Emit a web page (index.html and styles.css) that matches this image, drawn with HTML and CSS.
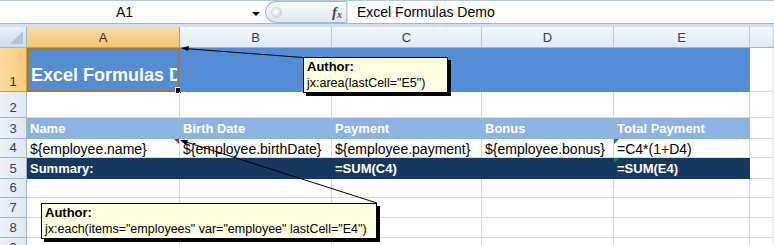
FILE: index.html
```html
<!DOCTYPE html>
<html>
<head>
<meta charset="utf-8">
<link rel="stylesheet" href="styles.css">
</head>
<body>
<div class="app">
  <div class="fbar">
    <div class="namebox"><span class="nb-text">A1</span><span class="nb-arrow"></span></div>
    <div class="pill"><span class="knob"></span><span class="fx">f<sub>x</sub></span></div>
    <div class="finput">Excel Formulas Demo</div>
  </div>
  <div class="band"></div>
  <div class="sheet">
    <div class="corner"><span class="corner-tri"></span></div>
    <div class="ch sel">A</div>
    <div class="ch">B</div>
    <div class="ch">C</div>
    <div class="ch">D</div>
    <div class="ch">E</div>
    <div class="ch last"></div>

    <div class="rh sel">1</div>
    <div class="c title a1"><span>Excel Formulas Demo</span><i class="handle"></i></div>
    <div class="c title"></div>
    <div class="c title"></div>
    <div class="c title"></div>
    <div class="c title"></div>
    <div class="c"></div>

    <div class="rh">2</div>
    <div class="c"></div><div class="c"></div><div class="c"></div><div class="c"></div><div class="c"></div><div class="c"></div>

    <div class="rh">3</div>
    <div class="c hdr">Name</div>
    <div class="c hdr">Birth Date</div>
    <div class="c hdr">Payment</div>
    <div class="c hdr">Bonus</div>
    <div class="c hdr">Total Payment</div>
    <div class="c"></div>

    <div class="rh">4</div>
    <div class="c data">${employee.name}<i class="red-tri"></i></div>
    <div class="c data">${employee.birthDate}</div>
    <div class="c data">${employee.payment}</div>
    <div class="c data">${employee.bonus}</div>
    <div class="c data">=C4*(1+D4)<i class="green-tri"></i></div>
    <div class="c"></div>

    <div class="rh">5</div>
    <div class="c sum">Summary:</div>
    <div class="c sum"></div>
    <div class="c sum">=SUM(C4)</div>
    <div class="c sum"></div>
    <div class="c sum">=SUM(E4)<i class="green-tri"></i></div>
    <div class="c"></div>

    <div class="rh">6</div>
    <div class="c"></div><div class="c"></div><div class="c"></div><div class="c"></div><div class="c"></div><div class="c"></div>
    <div class="rh">7</div>
    <div class="c"></div><div class="c"></div><div class="c"></div><div class="c"></div><div class="c"></div><div class="c"></div>
    <div class="rh">8</div>
    <div class="c"></div><div class="c"></div><div class="c"></div><div class="c"></div><div class="c"></div><div class="c"></div>
    <div class="rh">9</div>
    <div class="c"></div><div class="c"></div><div class="c"></div><div class="c"></div><div class="c"></div><div class="c"></div>
  </div>

  <svg class="arrows" width="774" height="245" viewBox="0 0 774 245">
    <line x1="303" y1="57.5" x2="184" y2="48.5" stroke="#000" stroke-width="1"/>
    <polygon points="181,48 189,46 188,51" fill="#000"/>
    <line x1="377" y1="203" x2="183" y2="141" stroke="#000" stroke-width="1"/>
    <polygon points="180,140 188,140 186,145" fill="#000"/>
  </svg>

  <div class="note note1">
    <div class="note-author">Author:</div>
    <div class="note-text">jx:area(lastCell="E5")</div>
  </div>
  <div class="note note2">
    <div class="note-author">Author:</div>
    <div class="note-text">jx:each(items="employees" var="employee" lastCell="E4")</div>
  </div>
</div>
</body>
</html>
```
FILE: styles.css
```css
html, body {
  margin: 0;
  padding: 0;
  background: #ffffff;
  overflow: hidden;
}
.app {
  position: relative;
  width: 774px;
  height: 245px;
  overflow: hidden;
  font-family: "Liberation Sans", Arial, sans-serif;
}
.fbar {
  height: 24px;
  box-sizing: border-box;
  display: flex;
  background: #ffffff;
  border-top: 1px solid #b7c9e0;
  border-bottom: 1px solid #9eb6ce;
}
.namebox {
  width: 265px;
  position: relative;
  display: flex;
  align-items: center;
  justify-content: center;
  font-size: 14px;
  color: #000;
  background: #fff;
}
.nb-text { margin-left: -16px; }
.nb-arrow {
  position: absolute;
  left: 252px;
  top: 11px;
  width: 0;
  height: 0;
  border-left: 4px solid transparent;
  border-right: 4px solid transparent;
  border-top: 4px solid #000;
}
.pill {
  width: 82px;
  box-sizing: border-box;
  border: 1px solid #a7b9cf;
  border-right: 1px solid #b5c6da;
  border-radius: 12px 0 0 12px;
  background: linear-gradient(#fbfcfe, #dfe7f2);
  display: flex;
  align-items: center;
  justify-content: space-between;
  padding: 0 4px 0 5px;
}
.knob {
  width: 9px;
  height: 9px;
  border-radius: 50%;
  background: radial-gradient(circle at 40% 40%, #ffffff, #c4ccd6);
  border: 1px solid #c9d1db;
}
.fx {
  font-family: "Liberation Serif", serif;
  font-style: italic;
  font-weight: bold;
  font-size: 15px;
  color: #4a4a4a;
  line-height: 1;
}
.fx sub {
  font-size: 10px;
  vertical-align: -1px;
}
.finput {
  flex: 1;
  padding-left: 9px;
  display: flex;
  align-items: center;
  font-size: 14px;
  color: #000;
  background: #fff;
  border-left: 1px solid #d6dfea;
}
.band {
  height: 3px;
  background: #d4e0ef;
}
.sheet {
  display: grid;
  grid-template-columns: 27px 153px 152px 150px 132px 136px 24px;
  grid-template-rows: 21px 44px 26px 21px 19px 21px 19px 20px 20px 20px;
}
.corner {
  position: relative;
  background: linear-gradient(#e9eff8, #cfdcec);
  border-right: 1px solid #9eb6ce;
  border-bottom: 1px solid #9eb6ce;
  box-sizing: border-box;
}
.corner-tri {
  position: absolute;
  right: 3px;
  bottom: 3px;
  width: 0;
  height: 0;
  border-left: 13px solid transparent;
  border-bottom: 13px solid #b7c3d1;
}
.ch {
  box-sizing: border-box;
  background: linear-gradient(#f6f9fd, #e1e9f4);
  border-right: 1px solid #b9cadd;
  border-bottom: 1px solid #9eb6ce;
  display: flex;
  align-items: center;
  justify-content: center;
  font-size: 13px;
  color: #27415f;
}
.ch.sel {
  background: linear-gradient(#fbdca4, #f5c66f);
  border-bottom: 1px solid #c79a4c;
  border-right: 1px solid #c79a4c;
  color: #2d2d2d;
}
.rh {
  box-sizing: border-box;
  background: linear-gradient(90deg, #edf2f9, #e0e8f3);
  border-right: 1px solid #9eb6ce;
  border-bottom: 1px solid #9eb6ce;
  display: flex;
  align-items: flex-end;
  justify-content: center;
  padding-bottom: 2px;
  font-size: 13px;
  color: #27415f;
}
.rh.sel {
  background: linear-gradient(90deg, #fcdba0, #f7cd7c);
  border-bottom: 1px solid #c79a4c;
  border-right: 1px solid #c79a4c;
  color: #2d2d2d;
}
.c {
  box-sizing: border-box;
  border-right: 1px solid #d4d9e2;
  border-bottom: 1px solid #d4d9e2;
  position: relative;
  display: flex;
  align-items: flex-end;
  padding: 0 0 1px 3px;
  white-space: nowrap;
  overflow: hidden;
  font-size: 14px;
  color: #000;
}
.c.title {
  background: #548dd4;
  border-right-color: #548dd4;
  border-bottom-color: #548dd4;
  color: #fff;
  font-weight: bold;
  font-size: 18px;
  padding-bottom: 4px;
}
.c.a1 {
  overflow: visible;
  border: 2px solid #a1793f;
  padding-left: 2px;
}
.c.a1 span {
  display: block;
  width: 146px;
  overflow: hidden;
}
.handle {
  position: absolute;
  right: -4px;
  bottom: -4px;
  width: 5px;
  height: 5px;
  background: #111;
  border: 1px solid #fff;
}
.c.hdr {
  background: #8db3e2;
  border-right-color: #8db3e2;
  border-bottom-color: #8db3e2;
  color: #fff;
  font-weight: bold;
  font-size: 13px;
  padding-bottom: 2px;
}
.c.data {
  padding-bottom: 0;
}
.c.sum {
  background: #17375e;
  border-right-color: #17375e;
  border-bottom-color: #17375e;
  color: #fff;
  font-weight: bold;
  font-size: 13px;
  padding-bottom: 2px;
}
.red-tri {
  position: absolute;
  right: 0;
  top: 0;
  width: 0;
  height: 0;
  border-left: 5px solid transparent;
  border-top: 5px solid #e8141c;
}
.green-tri {
  position: absolute;
  left: 0;
  top: 0;
  width: 0;
  height: 0;
  border-right: 5px solid transparent;
  border-top: 5px solid #0b8a2c;
}
.arrows {
  position: absolute;
  left: 0;
  top: 0;
  pointer-events: none;
}
.note {
  position: absolute;
  box-sizing: border-box;
  background: #ffffe1;
  border: 1px solid #000;
  box-shadow: 3px 3px 0 #000;
  padding: 1px 3px;
  font-size: 12.5px;
  color: #000;
  line-height: 16px;
}
.note-author { font-weight: bold; font-size: 13px; }
.note1 {
  left: 303px;
  top: 57px;
  width: 145px;
  height: 36px;
}
.note2 {
  left: 41px;
  top: 203px;
  width: 336px;
  height: 36px;
}
```
